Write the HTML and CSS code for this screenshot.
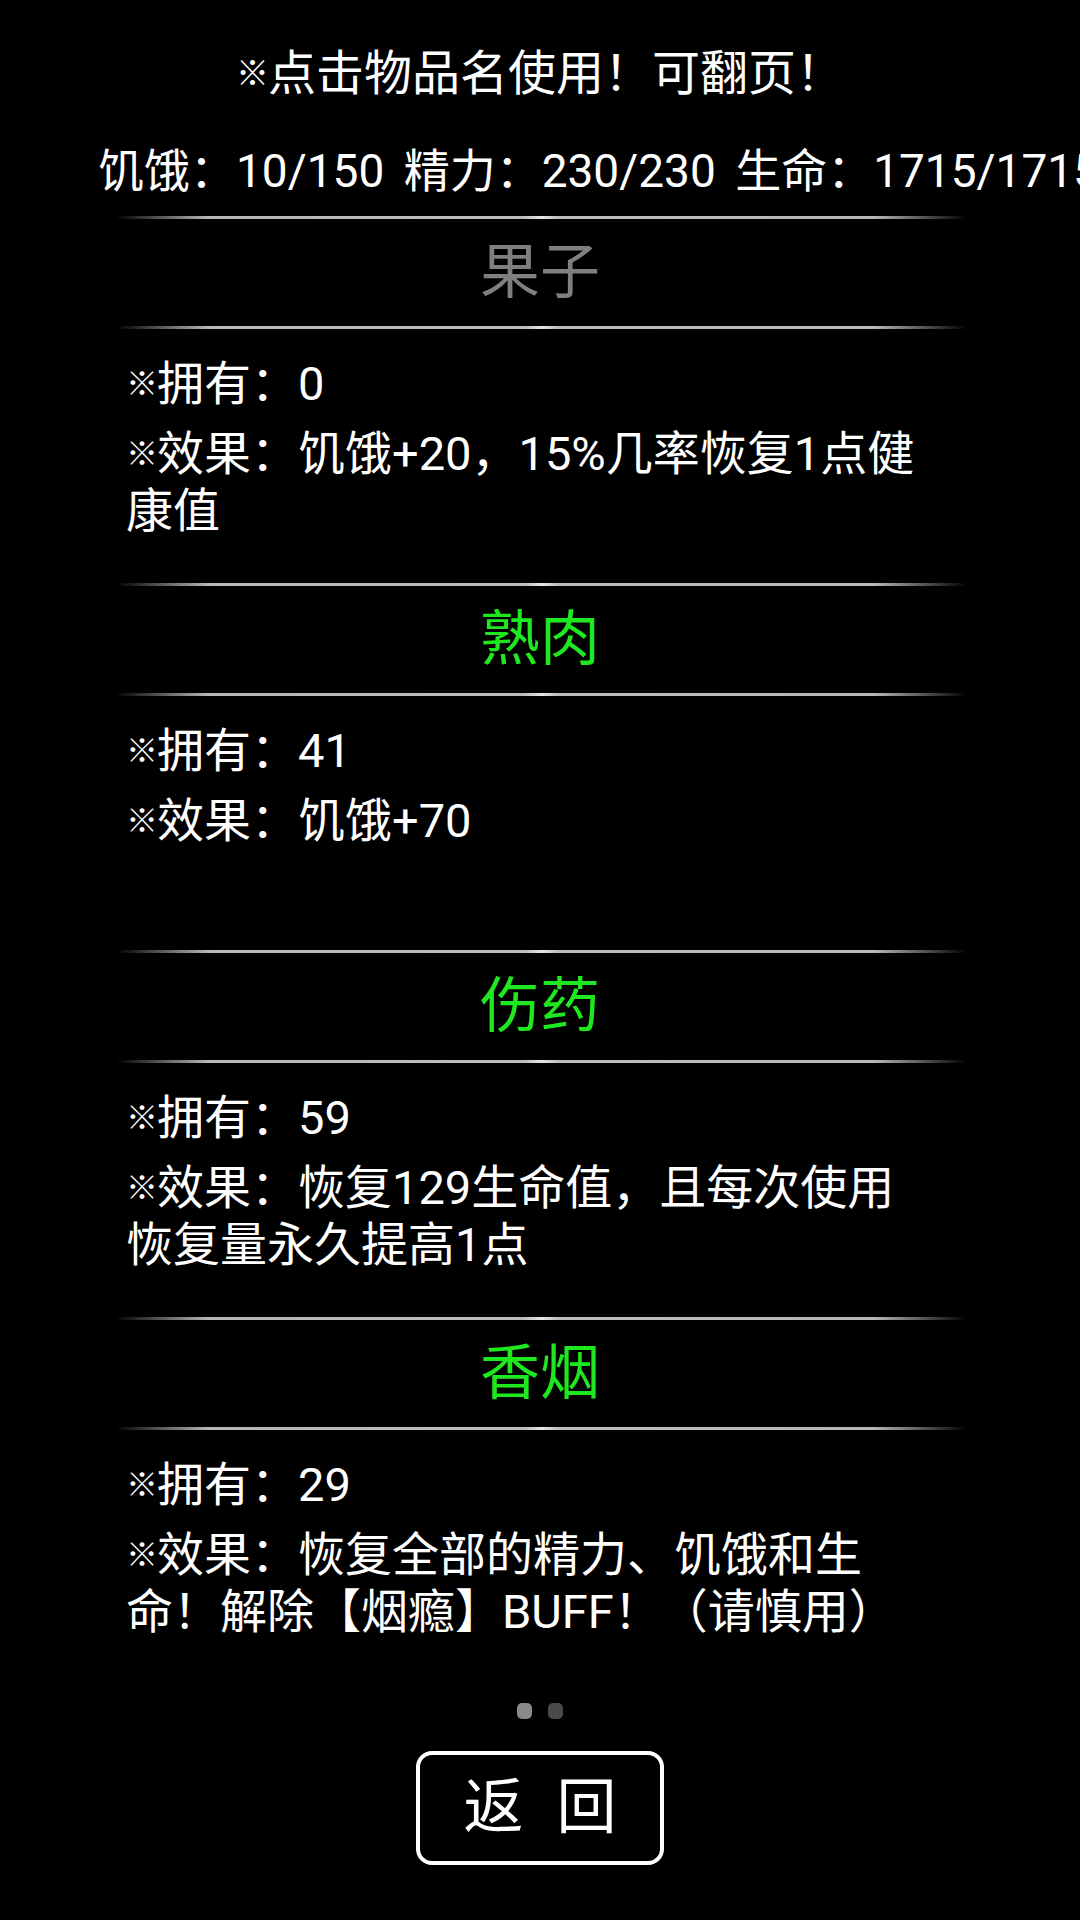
FILE: index.html
```html
<!DOCTYPE html>
<html lang="zh-CN">
<head>
<meta charset="utf-8">
<title>物品</title>
<link rel="stylesheet" href="styles.css">
</head>
<body>
<div class="screen">
  <div class="tip"><span class="mark">※</span>点击物品名使用！可翻页！</div>
  <div class="stats">饥饿：10/150 精力：230/230 生命：1715/1715</div>

  <div class="list">
    <section class="item">
      <div class="rule"></div>
      <div class="title off">果子</div>
      <div class="rule"></div>
      <div class="body">
        <p><span class="mark">※</span>拥有：0</p>
        <p><span class="mark">※</span>效果：饥饿+20，15%几率恢复1点健康值</p>
      </div>
    </section>

    <section class="item">
      <div class="rule"></div>
      <div class="title">熟肉</div>
      <div class="rule"></div>
      <div class="body">
        <p><span class="mark">※</span>拥有：41</p>
        <p><span class="mark">※</span>效果：饥饿+70</p>
      </div>
    </section>

    <section class="item">
      <div class="rule"></div>
      <div class="title">伤药</div>
      <div class="rule"></div>
      <div class="body">
        <p><span class="mark">※</span>拥有：59</p>
        <p><span class="mark">※</span>效果：恢复129生命值，且每次使用恢复量永久提高1点</p>
      </div>
    </section>

    <section class="item">
      <div class="rule"></div>
      <div class="title">香烟</div>
      <div class="rule"></div>
      <div class="body">
        <p><span class="mark">※</span>拥有：29</p>
        <p><span class="mark">※</span>效果：恢复全部的精力、饥饿和生命！解除【烟瘾】BUFF！（请慎用）</p>
      </div>
    </section>
  </div>

  <div class="pager">
    <span class="dot active"></span>
    <span class="dot"></span>
  </div>

  <div class="actions">
    <button class="btn" type="button">返 回</button>
  </div>
</div>
</body>
</html>
```

FILE: styles.css
```css
html, body {
  margin: 0;
  padding: 0;
  background: #000;
}

body {
  width: 1080px;
  height: 1920px;
  overflow: hidden;
  color: #fff;
  font-family: Roboto, "Noto Sans CJK TC", "Noto Sans CJK SC", sans-serif;
  font-size: 47px;
}

.screen {
  display: flex;
  flex-direction: column;
}

.mark {
  display: inline-block;
  width: 31px;
  font-size: 32px;
  line-height: 32px;
  vertical-align: 5px;
}

.tip {
  margin-top: 44px;
  height: 60px;
  line-height: 60px;
  text-align: center;
  font-size: 48px;
}

.tip .mark {
  font-size: 33px;
  width: 32px;
}

.stats {
  margin-top: 37px;
  height: 60px;
  line-height: 60px;
  padding-left: 98px;
  white-space: nowrap;
  font-size: 46px;
  word-spacing: 8px;
}

.list {
  margin-top: 15px;
  display: flex;
  flex-direction: column;
}

.item {
  height: 367px;
  display: flex;
  flex-direction: column;
}

.rule {
  width: 851px;
  height: 3px;
  margin-left: 116px;
  background: linear-gradient(to right,
    rgba(190,190,190,0) 0,
    #b9b9b9 11%,
    #bcbcbc 48%,
    #e6e6e6 50%,
    #bcbcbc 52%,
    #b9b9b9 89%,
    rgba(190,190,190,0) 100%);
}

.title {
  height: 107px;
  line-height: 107px;
  text-align: center;
  font-size: 60px;
  color: #1ee81e;
}

.title.off {
  color: #7f7f7f;
}

.body {
  margin-left: 126px;
  width: 800px;
  padding-top: 26px;
  display: flex;
  flex-direction: column;
  gap: 13px;
}

.body p {
  margin: 0;
  line-height: 57px;
}

.pager {
  margin-top: 19px;
  display: flex;
  justify-content: center;
  gap: 16px;
}

.dot {
  width: 15px;
  height: 16px;
  border-radius: 5px;
  background: #4a4a4a;
}

.dot.active {
  background: #8a8a8a;
}

.actions {
  margin-top: 32px;
  display: flex;
  justify-content: center;
}

.btn {
  width: 248px;
  height: 114px;
  box-sizing: border-box;
  border: 4px solid #fff;
  border-radius: 16px;
  background: #000;
  color: #fff;
  font-family: Roboto, "Noto Sans CJK TC", "Noto Sans CJK SC", sans-serif;
  font-size: 60px;
  word-spacing: 18px;
  padding: 0;
  line-height: 1;
}
```
